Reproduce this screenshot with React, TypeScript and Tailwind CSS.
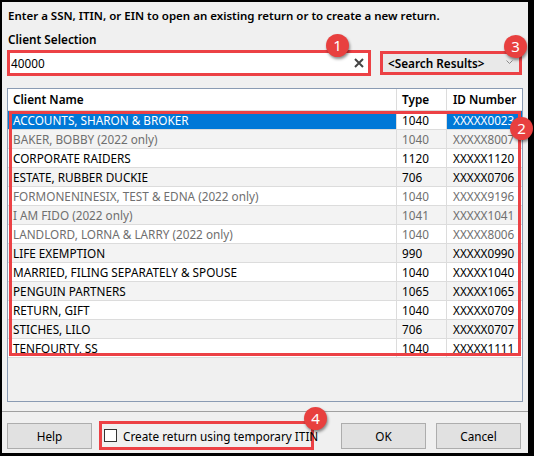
import React from 'react';

// Строки списка клиентов
const rows = [
  { name: 'ACCOUNTS, SHARON & BROKER', type: '1040', id: 'XXXXX0023', dim: false },
  { name: 'BAKER, BOBBY (2022 only)', type: '1040', id: 'XXXXX8007', dim: true },
  { name: 'CORPORATE RAIDERS', type: '1120', id: 'XXXXX1120', dim: false },
  { name: 'ESTATE, RUBBER DUCKIE', type: '706', id: 'XXXXX0706', dim: false },
  { name: 'FORMONENINESIX, TEST & EDNA (2022 only)', type: '1040', id: 'XXXXX9196', dim: true },
  { name: 'I AM FIDO (2022 only)', type: '1041', id: 'XXXXX1041', dim: true },
  { name: 'LANDLORD, LORNA & LARRY (2022 only)', type: '1040', id: 'XXXXX8006', dim: true },
  { name: 'LIFE EXEMPTION', type: '990', id: 'XXXXX0990', dim: false },
  { name: 'MARRIED, FILING SEPARATELY & SPOUSE', type: '1040', id: 'XXXXX1040', dim: false },
  { name: 'PENGUIN PARTNERS', type: '1065', id: 'XXXXX1065', dim: false },
  { name: 'RETURN, GIFT', type: '1040', id: 'XXXXX0709', dim: false },
  { name: 'STICHES, LILO', type: '706', id: 'XXXXX0707', dim: false },
  { name: 'TENFOURTY, SS', type: '1040', id: 'XXXXX1111', dim: false },
];

// Красный кружок с номером (аннотация)
function Badge({ n, className }: { n: number; className: string }) {
  return (
    <div
      className={`absolute w-[23px] h-[23px] rounded-full bg-[#e8403f] text-white text-[15px] leading-[23px] text-center shadow-[1px_2px_3px_rgba(0,0,0,0.45)] ${className}`}
    >
      {n}
    </div>
  );
}

export default function App() {
  return (
    <div
      className="relative w-[534px] h-[456px] bg-black pt-[2px] pl-[2px] pr-[6px] pb-[3px]"
      style={{ fontFamily: '"Segoe UI", "Noto Sans", sans-serif' }}
    >
      <div className="w-full h-full bg-[#f0f0f0] flex flex-col text-[11.75px] text-black">
        {/* Заголовок */}
        <div className="px-[6px] mt-[6px] leading-[16px] font-semibold text-[11.5px] whitespace-nowrap">
          Enter a SSN, ITIN, or EIN to open an existing return or to create a new return.
        </div>
        <div className="px-[6px] mt-[7px] leading-[16px] font-semibold">Client Selection</div>

        {/* Поле ввода и выпадающий список */}
        <div className="flex items-center px-[5px] mt-[3px]">
          <div className="w-[364px] h-[26px] border-[3px] border-[#ec4145] bg-white flex items-center pl-[1px] pr-[4px]">
            <span className="flex-1 leading-[16px]">40000</span>
            <svg width="10" height="10" viewBox="0 0 10 10" className="text-[#444]">
              <path d="M1 1L9 9M9 1L1 9" stroke="currentColor" strokeWidth="2" />
            </svg>
          </div>
          <div className="ml-[9px] w-[142px] h-[24px] border-[3px] border-[#ec4145] bg-[#e9e9e9] flex items-center pl-[5px] pr-[6px]">
            <span className="flex-1 font-semibold leading-[16px] whitespace-nowrap">&lt;Search Results&gt;</span>
            <svg width="7" height="5" viewBox="0 0 7 5" className="text-[#8a8a8a] -mt-[2px]">
              <path d="M0.5 0.5L3.5 3.5L6.5 0.5" stroke="currentColor" fill="none" strokeWidth="1" />
            </svg>
          </div>
        </div>

        {/* Таблица клиентов */}
        <div className="relative mx-[5px] mt-[12px] h-[314px] border border-[#8a9bb3] bg-[#f0f0f0] overflow-hidden">
          <div className="grid grid-cols-[389px_50px_1fr] h-[22px] bg-white border-b border-[#dcdcdc] font-semibold leading-[21px]">
            <div className="pl-[5px] border-r border-[#dcdcdc]">Client Name</div>
            <div className="pl-[5px] border-r border-[#dcdcdc]">Type</div>
            <div className="pl-[6px]">ID Number</div>
          </div>
          {rows.map((r, i) => {
            const selected = i === 0;
            const bg = i % 2 === 1 ? 'bg-[#f3f3f3]' : 'bg-white';
            const txt = r.dim ? 'text-[#6f6f6f]' : 'text-black';
            return (
              <div
                key={r.name}
                className={`grid grid-cols-[389px_50px_1fr] h-[19px] border-b border-[#dcdcdc] leading-[18px] ${bg} ${txt}`}
              >
                <div
                  className={`pl-[5px] border-r border-[#dcdcdc] whitespace-nowrap ${
                    selected ? 'bg-[#0078d7] text-white' : ''
                  }`}
                >
                  {r.name}
                </div>
                <div className="pl-[5px] border-r border-[#dcdcdc]">{r.type}</div>
                <div className={`pl-[6px] whitespace-nowrap ${selected ? 'bg-[#0078d7] text-white' : ''}`}>
                  {r.id}
                </div>
              </div>
            );
          })}
          {/* Рамка-аннотация вокруг строк */}
          <div className="absolute left-[1px] top-[22px] w-[512px] h-[245px] border-[3px] border-[#ec4145] pointer-events-none" />
        </div>

        {/* Разделитель */}
        <div className="mt-[9px] h-px bg-[#a0a0a0]" />

        {/* Кнопки */}
        <div className="flex items-center px-[5px] mt-[9px]">
          <button className="w-[85px] h-[26px] border border-[#adadad] bg-[#e1e1e1] leading-[16px]">Help</button>
          <div className="ml-[7px] w-[215px] h-[29px] border-[3px] border-[#ec4145] flex items-center pl-[2px]">
            <div className="w-[13px] h-[13px] shrink-0 border border-[#333] bg-white" />
            <span className="ml-[6px] leading-[16px] whitespace-nowrap">Create return using temporary ITIN</span>
          </div>
          <button className="ml-[27px] w-[85px] h-[26px] border border-[#adadad] bg-[#e1e1e1] leading-[16px]">OK</button>
          <button className="ml-[10px] w-[85px] h-[26px] border border-[#adadad] bg-[#e1e1e1] leading-[16px]">Cancel</button>
        </div>
      </div>

      <Badge n={1} className="left-[326px] top-[34px]" />
      <Badge n={3} className="left-[504px] top-[35px]" />
      <Badge n={2} className="left-[510px] top-[117px]" />
      <Badge n={4} className="left-[304px] top-[407px]" />
    </div>
  );
}
